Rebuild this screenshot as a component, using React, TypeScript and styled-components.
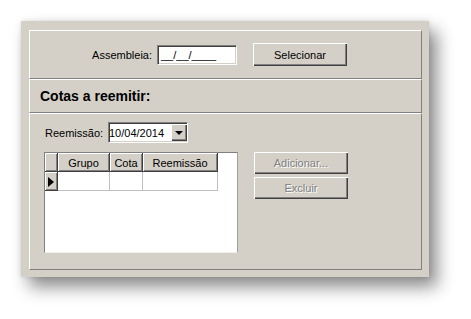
import styled, { createGlobalStyle } from "styled-components";

const GlobalStyle = createGlobalStyle`
  html, body {
    margin: 0;
    padding: 0;
    background: #ffffff;
  }
  body {
    font-family: "Liberation Sans", Arial, sans-serif;
    font-size: 11px;
    color: #000;
  }
`;

const Page = styled.div`
  width: 471px;
  height: 319px;
  box-sizing: border-box;
  padding: 21px 0 0 21px;
  overflow: hidden;
`;

const Dialog = styled.div`
  width: 408px;
  height: 256px;
  box-sizing: border-box;
  padding: 9px 7px 7px 8px;
  background: #d4d0c8;
  box-shadow: 8px 10px 16px rgba(0, 0, 0, 0.45), 0 0 5px rgba(0, 0, 0, 0.12);
  display: flex;
  flex-direction: column;
`;

const Panel = styled.div<{ $height?: number }>`
  box-sizing: border-box;
  border-top: 1px solid #ffffff;
  border-left: 1px solid #ffffff;
  border-right: 1px solid #808080;
  border-bottom: 1px solid #808080;
  ${(p) => (p.$height ? `height: ${p.$height}px; flex: none;` : `flex: 1;`)}
`;

const TopRow = styled.div`
  height: 100%;
  display: flex;
  align-items: center;
`;

const Label = styled.label<{ $width: number; $align?: "left" | "right" }>`
  width: ${(p) => p.$width}px;
  flex: none;
  text-align: ${(p) => p.$align || "left"};
  box-sizing: border-box;
`;

const Sunken = styled.div<{ $width: number; $height: number }>`
  width: ${(p) => p.$width}px;
  height: ${(p) => p.$height}px;
  box-sizing: border-box;
  background: #ffffff;
  border-top: 1px solid #808080;
  border-left: 1px solid #808080;
  border-right: 1px solid #ffffff;
  border-bottom: 1px solid #ffffff;
  box-shadow: inset 1px 1px #404040, inset -1px -1px #d4d0c8;
  display: flex;
  align-items: center;
  flex: none;
`;

const MaskText = styled.span`
  padding-left: 3px;
  padding-top: 1px;
  letter-spacing: 0;
`;

const Button = styled.div<{ $disabled?: boolean }>`
  width: 94px;
  height: 22px;
  box-sizing: border-box;
  background: #d4d0c8;
  box-shadow: inset 1px 1px #ffffff, inset -1px -1px #404040,
    inset -2px -2px #808080;
  display: flex;
  align-items: center;
  justify-content: center;
  flex: none;
  color: ${(p) => (p.$disabled ? "#808080" : "#000")};
  text-shadow: ${(p) => (p.$disabled ? "1px 1px 0 #ffffff" : "none")};
`;

const SectionTitle = styled.div`
  height: 100%;
  display: flex;
  align-items: center;
  padding-left: 10px;
  font-size: 14px;
  font-weight: bold;
`;

const Body = styled.div`
  padding: 8px 0 0 14px;
  display: flex;
  flex-direction: column;
`;

const FieldRow = styled.div`
  display: flex;
  align-items: center;
`;

const ComboText = styled.span`
  flex: 1;
  padding-left: 0;
  padding-top: 1px;
`;

const ComboButton = styled.div`
  width: 16px;
  height: 17px;
  margin-right: 0;
  box-sizing: border-box;
  background: #d4d0c8;
  box-shadow: inset 1px 1px #ffffff, inset -1px -1px #404040,
    inset -2px -2px #808080;
  display: flex;
  align-items: center;
  justify-content: center;

  &::after {
    content: "";
    border-left: 4px solid transparent;
    border-right: 4px solid transparent;
    border-top: 4px solid #000;
    margin-top: 1px;
  }
`;

const LowerRow = styled.div`
  display: flex;
  align-items: flex-start;
  gap: 16px;
  margin-top: 9px;
`;

const Grid = styled.div`
  width: 194px;
  height: 101px;
  box-sizing: border-box;
  background: #ffffff;
  border-top: 1px solid #808080;
  border-left: 1px solid #808080;
  border-right: 1px solid #a0a0a0;
  border-bottom: 1px solid #f0efea;
  display: grid;
  grid-template-columns: 13px 52px 33px 75px;
  grid-auto-rows: 19px;
  align-content: start;
`;

const HeadCell = styled.div`
  box-sizing: border-box;
  background: #d4d0c8;
  border-right: 1px solid #404040;
  border-bottom: 1px solid #404040;
  box-shadow: inset 1px 1px #ffffff, inset -1px -1px #808080;
  display: flex;
  align-items: center;
  justify-content: center;
  padding-top: 1px;
`;

const Indicator = styled(HeadCell)`
  justify-content: flex-start;
  padding-left: 3px;

  &::after {
    content: "";
    border-left: 6px solid #000;
    border-top: 5px solid transparent;
    border-bottom: 5px solid transparent;
  }
`;

const DataCell = styled.div`
  box-sizing: border-box;
  border-right: 1px solid #c0c0c0;
  border-bottom: 1px solid #c0c0c0;
`;

const ButtonColumn = styled.div`
  display: flex;
  flex-direction: column;
  gap: 3px;
`;

export default function App() {
  return (
    <>
      <GlobalStyle />
      <Page>
        <Dialog>
          <Panel $height={49}>
            <TopRow>
              <Label $width={122} $align="right">
                Assembleia:
              </Label>
              <Sunken $width={80} $height={20} style={{ marginLeft: 5 }}>
                <MaskText>__/__/____</MaskText>
              </Sunken>
              <Button style={{ marginLeft: 16, height: 23 }}>Selecionar</Button>
            </TopRow>
          </Panel>
          <Panel $height={34}>
            <SectionTitle>Cotas a reemitir:</SectionTitle>
          </Panel>
          <Panel>
            <Body>
              <FieldRow>
                <Label $width={64} style={{ paddingLeft: 1 }}>
                  Reemissão:
                </Label>
                <Sunken $width={80} $height={21}>
                  <ComboText>10/04/2014</ComboText>
                  <ComboButton />
                </Sunken>
              </FieldRow>
              <LowerRow>
                <Grid>
                  <HeadCell />
                  <HeadCell>Grupo</HeadCell>
                  <HeadCell>Cota</HeadCell>
                  <HeadCell>Reemissão</HeadCell>
                  <Indicator />
                  <DataCell />
                  <DataCell />
                  <DataCell />
                </Grid>
                <ButtonColumn>
                  <Button $disabled>Adicionar...</Button>
                  <Button $disabled>Excluir</Button>
                </ButtonColumn>
              </LowerRow>
            </Body>
          </Panel>
        </Dialog>
      </Page>
    </>
  );
}
